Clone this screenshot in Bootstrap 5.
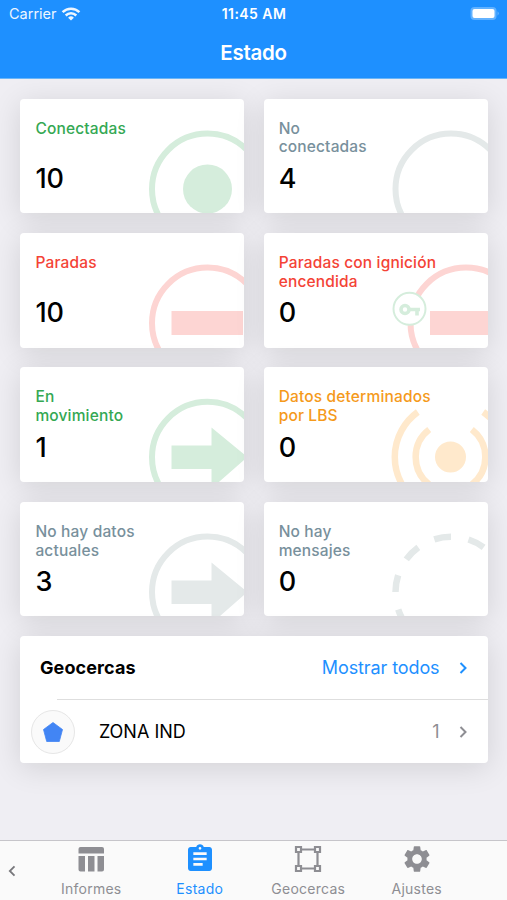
<!DOCTYPE html>
<html lang="es">
<head>
<meta charset="utf-8">
<meta name="viewport" content="width=device-width, initial-scale=1">
<title>Estado</title>
<link href="https://cdn.jsdelivr.net/npm/bootstrap@5.3.0/dist/css/bootstrap.min.css" rel="stylesheet">
<style>
  body { font-family: Inter, "Liberation Sans", sans-serif; background: #efeef3; color: #000; height: 900px; overflow: hidden; }
  svg { display: block; flex: none; }
  .app-header { background: #1e90ff; height: 79px; border-bottom: 1px solid #6bb6f8; }
  .status-bar { height: 28px; font-size: 14.5px; line-height: 28px; padding: 0 8px 0 9px; }
  .status-bar > * { flex: 1 1 0; }
  .status-carrier { opacity: .92; }
  .status-time { font-weight: 600; font-size: 14px; letter-spacing: .45px; }
  .screen-title { font-size: 20.5px; font-weight: 600; line-height: 50px; letter-spacing: -.3px; }
  .app-main { padding: 19.5px 19.5px 0 20.4px; }
  .tiles { display: grid; grid-template-columns: 1fr 1fr; gap: 19.7px 19.4px; }
  .tile, .zones { border: 0; border-radius: 4px; box-shadow: 0 5px 30px rgba(0,0,0,.12); }
  .tile { height: 114.7px; overflow: hidden; padding: 21.2px 15px 0; }
  .tile-art { position: absolute; left: 0; top: 0; }
  .tile-name { position: relative; font-size: 15.5px; font-weight: 500; line-height: 18.7px; height: 43.1px; letter-spacing: .16px; }
  .tile-count { position: relative; font-size: 27px; font-weight: 500; line-height: 32px; }
  .c-green { color: #34a853; } .c-red { color: #f44336; } .c-orange { color: #f59a1b; } .c-gray { color: #78909c; }
  .a-green { color: #d5eddc; } .a-red { color: #fdd5d3; } .a-orange { color: #ffe9cc; } .a-gray { color: #e4e9e9; }
  .zones { margin-top: 19.7px; height: 127px; font-size: 18px; }
  .zones-head { height: 63px; padding: 0 18px 0 19.6px; }
  .zones-title { letter-spacing: .1px; }
  .zones-more { letter-spacing: -.1px; }
  .zones-rule { margin-left: 37px; border-top: 1px solid #dedede; }
  .zone-row { height: 63px; padding: 0 18px 0 11px; }
  .zone-icon { width: 44px; height: 44px; border: 1px solid #e6e6e6; background: #fafafa; margin-right: 23.5px; }
  .c-blue { color: #1e90ff; } .c-mute { color: #8e8e93; }
  .tabs-bar { height: 60px; background: #fafafa; border-top: 1px solid #c6c5ca; padding-right: 36px; color: #8e8e93; font-size: 14px; }
  .tabs-bar a { color: inherit; padding-top: 2px; flex: 1 1 0; }
  .tabs-bar a.active { color: #1e90ff; }
  .tabs-bar span { line-height: 18px; margin-top: 5px; letter-spacing: .25px; }
  .tabs-prev { width: 37px; padding-left: 7px; flex: none; }
</style>
<script src="https://cdn.jsdelivr.net/npm/bootstrap@5.3.0/dist/js/bootstrap.bundle.min.js"></script>
</head>
<body class="d-flex flex-column">
<header class="app-header text-white flex-shrink-0">
  <div class="status-bar d-flex align-items-center">
    <div class="status-carrier d-flex align-items-center gap-1"><span>Carrier</span>
      <svg width="20" height="16" viewBox="0 0 20 16" fill="none" stroke="#fff" stroke-width="2.5"><path d="M1.6 6.2a12 12 0 0 1 16.8 0M4.7 9.5a7.6 7.6 0 0 1 10.6 0"/><path d="M10 14.6 7.1 11.7a4.1 4.1 0 0 1 5.8 0z" fill="#fff" stroke="none"/></svg>
    </div>
    <div class="status-time text-center">11:45 AM</div>
    <div class="d-flex justify-content-end">
      <svg width="30" height="16" viewBox="0 0 30 16"><rect x="1.5" y="1" width="26" height="13" rx="4" fill="#62b2ff"/><rect x="3.5" y="3" width="22" height="9" rx="2" fill="#fff"/><path d="M28.5 5.3q2.6 2.2 0 4.4z" fill="#62b2ff"/></svg>
    </div>
  </div>
  <h1 class="screen-title text-center m-0">Estado</h1>
</header>

<main class="app-main flex-grow-1">
  <div class="tiles">
    <div class="card tile">
      <svg class="tile-art a-green" width="224" height="115" fill="none" stroke="currentColor"><circle cx="187.5" cy="90" r="55.5" stroke-width="6"/><circle cx="187.5" cy="90" r="24.5" fill="currentColor" stroke="none"/></svg>
      <div class="tile-name c-green">Conectadas</div><div class="tile-count">10</div>
    </div>
    <div class="card tile">
      <svg class="tile-art a-gray" width="224" height="115" fill="none" stroke="currentColor"><circle cx="187" cy="90" r="55.5" stroke-width="6"/></svg>
      <div class="tile-name c-gray">No<br>conectadas</div><div class="tile-count">4</div>
    </div>
    <div class="card tile">
      <svg class="tile-art a-red" width="224" height="115" fill="none" stroke="currentColor"><circle cx="187.5" cy="90" r="55.5" stroke-width="6"/><path d="M151.5 78H223v24h-71.500z" fill="currentColor" stroke="none"/></svg>
      <div class="tile-name c-red">Paradas</div><div class="tile-count">10</div>
    </div>
    <div class="card tile">
      <svg class="tile-art a-red" width="224" height="115" fill="none" stroke="currentColor"><circle cx="202" cy="90" r="55.5" stroke-width="6"/><path d="M166 78h58v24h-58z" fill="currentColor" stroke="none"/>
        <g class="a-green" stroke="currentColor"><circle cx="145.5" cy="75.8" r="16" fill="#fff" stroke-width="2"/><circle cx="141" cy="76.5" r="4" stroke-width="3.6"/><path d="M145 76.5h11M153 76.5v6" stroke-width="3.6"/></g></svg>
      <div class="tile-name c-red">Paradas con ignición<br>encendida</div><div class="tile-count">0</div>
    </div>
    <div class="card tile">
      <svg class="tile-art a-green" width="224" height="115" fill="none" stroke="currentColor"><circle cx="187.5" cy="90.3" r="55.5" stroke-width="6"/><path d="M151.500 78.5h40V60.5l36 29.5-36 31.5v-19.5h-40z" fill="currentColor" stroke="none"/></svg>
      <div class="tile-name c-green">En<br>movimiento</div><div class="tile-count">1</div>
    </div>
    <div class="card tile">
      <svg class="tile-art a-orange" width="224" height="115" fill="none" stroke="currentColor"><circle cx="186.5" cy="90" r="15.5" fill="currentColor" stroke="none"/><g stroke-width="6.5"><path d="M153.8 45A55.5 55.5 0 0 0 153.8 135M219.2 45A55.5 55.5 0 0 1 219.2 135M165.2 62.5A34.7 34.7 0 0 0 165.2 117.5M207.8 62.5A34.7 34.7 0 0 1 207.8 117.5"/></g></svg>
      <div class="tile-name c-orange">Datos determinados<br>por LBS</div><div class="tile-count">0</div>
    </div>
    <div class="card tile">
      <svg class="tile-art a-gray" width="224" height="115" fill="none" stroke="currentColor"><circle cx="187.5" cy="90" r="55.5" stroke-width="6"/><path d="M151.500 78.5h40V60.5l36 29.5-36 31.5v-19.5h-40z" fill="currentColor" stroke="none"/></svg>
      <div class="tile-name c-gray">No hay datos<br>actuales</div><div class="tile-count">3</div>
    </div>
    <div class="card tile">
      <svg class="tile-art a-gray" width="224" height="115" fill="none" stroke="currentColor"><circle cx="187" cy="90.2" r="55.5" stroke-width="6.5" stroke-dasharray="17 17.87"/></svg>
      <div class="tile-name c-gray">No hay<br>mensajes</div><div class="tile-count">0</div>
    </div>
  </div>

  <section class="card zones">
    <div class="zones-head d-flex align-items-center">
      <strong class="me-auto zones-title">Geocercas</strong>
      <span class="c-blue zones-more">Mostrar todos</span>
      <svg class="ms-3 c-blue" width="14" height="14" viewBox="0 0 14 14" fill="none" stroke="currentColor" stroke-width="2"><path d="m4.5 2 5 5-5 5"/></svg>
    </div>
    <div class="zones-rule"></div>
    <div class="zone-row d-flex align-items-center">
      <div class="zone-icon rounded-circle d-flex align-items-center justify-content-center"><svg width="22" height="20" viewBox="0 0 22 20"><path d="M11 .5 20.5 7.5 17.3 19.5H4.7L1.5 7.5z" fill="#4285f4" stroke="#4285f4" stroke-width=".8" stroke-linejoin="round"/></svg></div>
      <span class="me-auto">ZONA IND</span>
      <span class="c-mute">1</span>
      <svg class="ms-3 c-mute" width="14" height="14" viewBox="0 0 14 14" fill="none" stroke="currentColor" stroke-width="2"><path d="m4.5 2 5 5-5 5"/></svg>
    </div>
  </section>
</main>

<nav class="tabs-bar d-flex flex-shrink-0">
  <div class="tabs-prev d-flex align-items-center"><svg width="10" height="12" viewBox="0 0 10 12" fill="none" stroke="#77777b" stroke-width="1.8"><path d="M7.5 1.3 2.8 6l4.7 4.7"/></svg></div>
  <a href="#" class="d-flex flex-column align-items-center text-decoration-none">
    <svg width="32" height="32" viewBox="0 0 32 32" fill="currentColor"><path d="M5.500 4h21.500q2 0 2 2v4.500H3.500V6q0-2 2-2zM3.500 13h6.500v15.500H5.500q-2 0-2-2zM13 13h6.500v15.500H13zM22.500 13H29v13.500q0 2-2 2h-4.500z"/></svg>
    <span>Informes</span></a>
  <a href="#" class="active d-flex flex-column align-items-center text-decoration-none">
    <svg width="32" height="32" viewBox="0 0 24 24" fill="currentColor"><path d="M19 3h-4.18C14.4 1.84 13.3 1 12 1s-2.4.84-2.82 2H5c-1.1 0-2 .9-2 2v14c0 1.1.9 2 2 2h14c1.1 0 2-.9 2-2V5c0-1.1-.9-2-2-2zm-7 0c.55 0 1 .45 1 1s-.45 1-1 1-1-.45-1-1 .45-1 1-1zm2 14H7v-2h7v2zm3-4H7v-2h10v2zm0-4H7V7h10v2z"/></svg>
    <span>Estado</span></a>
  <a href="#" class="d-flex flex-column align-items-center text-decoration-none">
    <svg width="32" height="32" viewBox="0 0 32 32" fill="none" stroke="currentColor" stroke-width="2.2"><path d="M9.5 6.5h13M9.5 25.5h13M6.500 9.5v13M25.5 9.5v13"/><path d="M4 4h5v5H4zM23 4h5v5h-5zM4 23h5v5H4zM23 23h5v5h-5z"/></svg>
    <span>Geocercas</span></a>
  <a href="#" class="d-flex flex-column align-items-center text-decoration-none">
    <svg width="32" height="32" viewBox="0 0 24 24" fill="currentColor"><path d="M19.14 12.94c.04-.3.06-.61.06-.94 0-.32-.02-.64-.07-.94l2.03-1.58c.18-.14.23-.41.12-.61l-1.92-3.32c-.12-.22-.37-.29-.59-.22l-2.39.96c-.5-.38-1.03-.7-1.62-.94l-.36-2.54c-.04-.24-.24-.41-.48-.41h-3.84c-.24 0-.43.17-.47.41l-.36 2.54c-.59.24-1.13.57-1.62.94l-2.39-.96c-.22-.08-.47 0-.59.22L2.74 8.87c-.12.21-.08.47.12.61l2.03 1.58c-.05.3-.09.63-.09.94s.02.64.07.94l-2.03 1.58c-.18.14-.23.41-.12.61l1.92 3.32c.12.22.37.29.59.22l2.39-.96c.5.38 1.03.7 1.62.94l.36 2.54c.05.24.24.41.48.41h3.84c.24 0 .44-.17.47-.41l.36-2.54c.59-.24 1.13-.56 1.62-.94l2.39.96c.22.08.47 0 .59-.22l1.92-3.32c.12-.22.07-.47-.12-.61l-2.01-1.58zM12 15.6c-1.98 0-3.6-1.62-3.6-3.6s1.62-3.6 3.6-3.6 3.6 1.62 3.6 3.6-1.62 3.6-3.6 3.6z"/></svg>
    <span>Ajustes</span></a>
</nav>
</body>
</html>
